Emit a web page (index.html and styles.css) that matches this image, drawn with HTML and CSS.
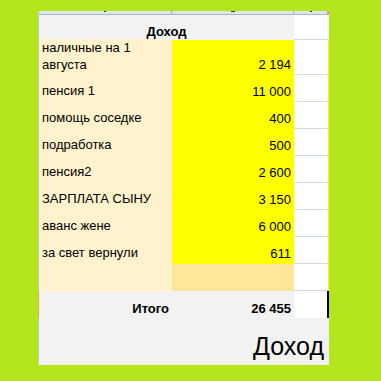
FILE: index.html
```html
<!DOCTYPE html>
<html lang="ru">
<head>
<meta charset="utf-8">
<title>Доход</title>
<link rel="stylesheet" href="styles.css">
</head>
<body>
<div class="sheet">
  <div class="row strip">
    <div class="sh"><span class="mark"></span></div>
    <div class="sh"><span class="mark wide"></span></div>
    <div class="sh"><span class="mark"></span></div>
    <div class="sh d-orange"></div>
  </div>
  <div class="row head">
    <div class="title">Доход</div>
    <div class="c"></div>
    <div class="d d-white"></div>
  </div>
  <div class="row tall">
    <div class="a">наличные на 1<br>августа</div>
    <div class="b">2 194</div>
    <div class="c"></div>
    <div class="d"></div>
  </div>
  <div class="row">
    <div class="a">пенсия 1</div>
    <div class="b">11 000</div>
    <div class="c"></div>
    <div class="d"></div>
  </div>
  <div class="row">
    <div class="a">помощь соседке</div>
    <div class="b">400</div>
    <div class="c"></div>
    <div class="d"></div>
  </div>
  <div class="row">
    <div class="a">подработка</div>
    <div class="b">500</div>
    <div class="c"></div>
    <div class="d"></div>
  </div>
  <div class="row">
    <div class="a">пенсия2</div>
    <div class="b">2 600</div>
    <div class="c"></div>
    <div class="d"></div>
  </div>
  <div class="row">
    <div class="a">ЗАРПЛАТА СЫНУ</div>
    <div class="b">3 150</div>
    <div class="c"></div>
    <div class="d"></div>
  </div>
  <div class="row">
    <div class="a">аванс жене</div>
    <div class="b">6 000</div>
    <div class="c"></div>
    <div class="d"></div>
  </div>
  <div class="row">
    <div class="a">за свет вернули</div>
    <div class="b">611</div>
    <div class="c"></div>
    <div class="d"></div>
  </div>
  <div class="row">
    <div class="a"></div>
    <div class="b tan"></div>
    <div class="c"></div>
    <div class="d"></div>
  </div>
  <div class="row total">
    <div class="ta">Итого</div>
    <div class="tb">26 455</div>
    <div class="tc"></div>
    <div class="d d-black"></div>
  </div>
  <div class="row big">
    <div class="bigtext">Доход</div>
  </div>
</div>
</body>
</html>
```
FILE: styles.css
```css
* { box-sizing: border-box; }

body {
  margin: 0;
  background: #b5e61d;
  font-family: "Liberation Sans", Arial, sans-serif;
  font-size: 13px;
  line-height: 17px;
  color: #000;
  width: 381px;
  height: 381px;
  overflow: hidden;
}

.sheet {
  margin: 11px 0 0 38px;
  width: 291px;
}

.row {
  display: grid;
  grid-template-columns: 133px 122px 34px 1px;
  height: 27px;
  border-left: 1px solid #b9c8db;
}

.strip {
  height: 4px;
}

.sh {
  background: #dfe5ee;
  border-bottom: 1px solid #a9b8cc;
  border-right: 1px solid #9fb1c8;
  display: flex;
  justify-content: center;
  align-items: flex-start;
}

.mark {
  width: 2px;
  height: 1px;
  background: #333;
}

.mark.wide {
  width: 4px;
}

.d-orange {
  background: #f0a050;
  border: 0;
}

.head {
  height: 25px;
}

.title {
  grid-column: span 2;
  background: #f2f2f2;
  font-weight: bold;
  text-align: center;
  display: flex;
  justify-content: center;
  align-items: flex-end;
}

.tall {
  height: 35px;
}

.a {
  background: #fff2cc;
  display: flex;
  align-items: flex-end;
  padding: 0 3px 3px 3px;
  white-space: nowrap;
}

.tall .a {
  display: block;
  padding-top: 0;
  padding-bottom: 0;
  margin-top: -1px;
}

.b {
  background: #ffff00;
  display: flex;
  justify-content: flex-end;
  align-items: flex-end;
  padding: 0 3px 2px 0;
}

.tall .b {
  padding-bottom: 2px;
}

.b.tan {
  background: #ffe699;
}

.c {
  background: #fff;
  border-bottom: 1px solid #d0d7e5;
}

.d {
  background: #ffff00;
}

.d-white {
  background: #fff;
}

.total {
  border-left-color: #f4a04a;
}

.ta,
.tb {
  background: #f2f2f2;
  font-weight: bold;
  display: flex;
  justify-content: flex-end;
  align-items: flex-end;
  padding: 0 3px 1px 0;
}

.tc {
  background: #fff;
  border-right: 1px solid #000;
}

.d-black {
  background: #000;
}

.big {
  display: flex;
  height: 47px;
  background: #f2f2f2;
  justify-content: flex-end;
  align-items: flex-end;
  padding: 0 5px 4px 0;
}

.bigtext {
  font-size: 25px;
  line-height: 30px;
}
```
